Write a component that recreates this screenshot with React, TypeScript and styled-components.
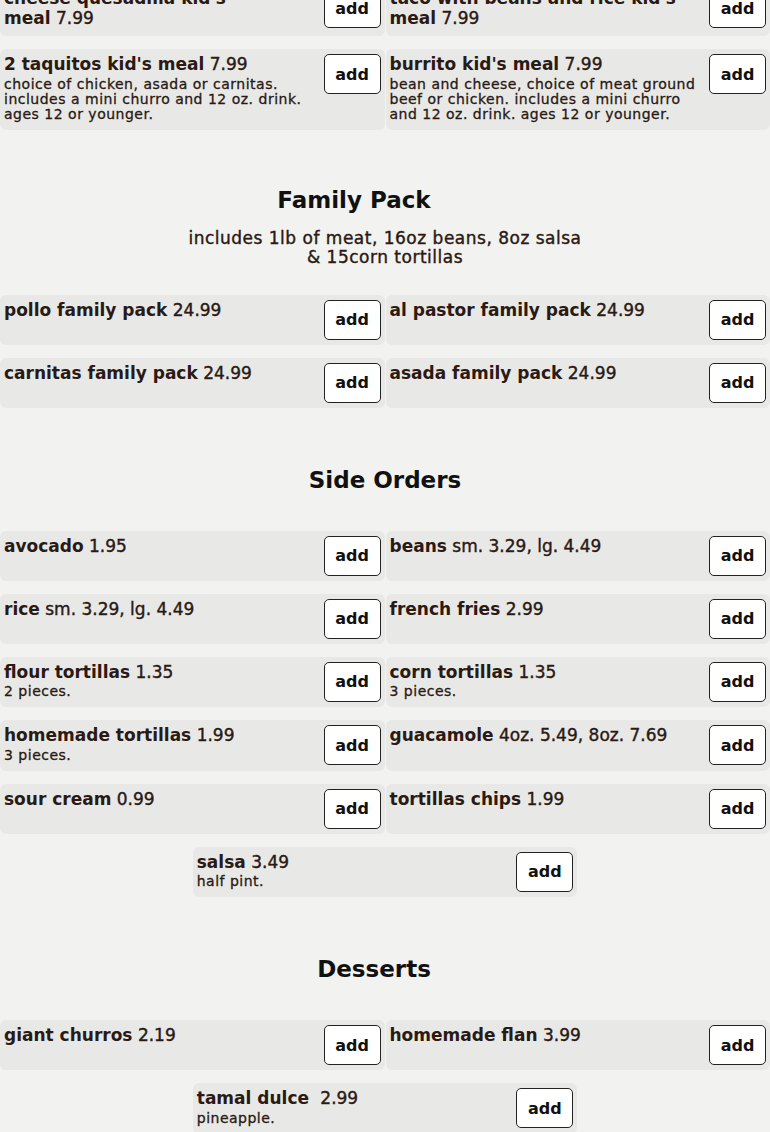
import styled, { createGlobalStyle } from 'styled-components';

type Item = {
	name: string;
	price: string;
	desc?: string;
};

type Section = {
	title?: string;
	subtitle?: string[];
	shift?: number;
	items: Item[];
};

const sections: Section[] = [
	{
		items: [
			{ name: "cheese quesadilla kid's\nmeal", price: '7.99' },
			{ name: "taco with beans and rice kid's meal", price: '7.99' },
			{
				name: "2 taquitos kid's meal",
				price: '7.99',
				desc: 'choice of chicken, asada or carnitas. includes a mini churro and 12 oz. drink. ages 12 or younger.',
			},
			{
				name: "burrito kid's meal",
				price: '7.99',
				desc: 'bean and cheese, choice of meat ground beef or chicken. includes a mini churro and 12 oz. drink. ages 12 or younger.',
			},
		],
	},
	{
		title: 'Family Pack',
		shift: 31,
		subtitle: ['includes 1lb of meat, 16oz beans, 8oz salsa', '& 15corn tortillas'],
		items: [
			{ name: 'pollo family pack', price: '24.99' },
			{ name: 'al pastor family pack', price: '24.99' },
			{ name: 'carnitas family pack', price: '24.99' },
			{ name: 'asada family pack', price: '24.99' },
		],
	},
	{
		title: 'Side Orders',
		items: [
			{ name: 'avocado', price: '1.95' },
			{ name: 'beans', price: 'sm. 3.29, lg. 4.49' },
			{ name: 'rice', price: 'sm. 3.29, lg. 4.49' },
			{ name: 'french fries', price: '2.99' },
			{ name: 'flour tortillas', price: '1.35', desc: '2 pieces.' },
			{ name: 'corn tortillas', price: '1.35', desc: '3 pieces.' },
			{ name: 'homemade tortillas', price: '1.99', desc: '3 pieces.' },
			{ name: 'guacamole', price: '4oz. 5.49, 8oz. 7.69' },
			{ name: 'sour cream', price: '0.99' },
			{ name: 'tortillas chips', price: '1.99' },
			{ name: 'salsa', price: '3.49', desc: 'half pint.' },
		],
	},
	{
		title: 'Desserts',
		shift: 11,
		items: [
			{ name: 'giant churros', price: '2.19' },
			{ name: 'homemade flan', price: '3.99' },
			{ name: 'tamal dulce\u00a0', price: '2.99', desc: 'pineapple.' },
		],
	},
];

const MenuItem = ({ item }: { item: Item }) => {
	return (
		<Card>
			<Info>
				<Title>
					<Name>{item.name}</Name> <Price>{item.price}</Price>
				</Title>
				{item.desc && <Desc>{item.desc}</Desc>}
			</Info>
			<AddButton>add</AddButton>
		</Card>
	);
};

const App = () => {
	return (
		<>
			<GlobalStyle />
			<Page>
				{sections.map((section, i) => (
					<MenuSection key={i} $first={i === 0} $tight={!!section.subtitle}>
						{section.title && (
							<Heading $shift={section.shift ?? 0} $tight={!!section.subtitle}>
								{section.title}
							</Heading>
						)}
						{section.subtitle && (
							<Subtitle>
								{section.subtitle.map((line) => (
									<div key={line}>{line}</div>
								))}
							</Subtitle>
						)}
						<Grid>
							{section.items.map((item) => (
								<MenuItem key={item.name} item={item} />
							))}
						</Grid>
					</MenuSection>
				))}
			</Page>
		</>
	);
};

const GlobalStyle = createGlobalStyle`
	body {
		margin: 0;
		background: #f2f3f0;
		font-family: 'DejaVu Sans', 'Noto Sans', sans-serif;
		color: #2a1914;
	}
`;

const Page = styled.div`
	margin-top: -17px;
	overflow: hidden;
`;

const MenuSection = styled.section<{ $first: boolean; $tight: boolean }>`
	padding-top: ${({ $first, $tight }) => ($first ? '0' : $tight ? '56px' : '58px')};
`;

const Heading = styled.h2<{ $shift: number; $tight: boolean }>`
	margin: 0 0 ${({ $tight }) => ($tight ? '15px' : '37px')};
	padding-right: ${({ $shift }) => $shift * 2}px;
	text-align: center;
	font-size: 23px;
	line-height: 28px;
	font-weight: 700;
	color: #111;
`;

const Subtitle = styled.div`
	margin: 0 0 28px;
	text-align: center;
	font-size: 17px;
	line-height: 19px;
	letter-spacing: 0.5px;
	-webkit-text-stroke: 0.4px currentColor;
`;

const Grid = styled.div`
	display: flex;
	flex-wrap: wrap;
	justify-content: center;
	column-gap: 1px;
	row-gap: 13px;
`;

const Card = styled.div`
	box-sizing: border-box;
	width: calc(50% - 0.5px);
	min-height: 50px;
	display: flex;
	justify-content: space-between;
	align-items: flex-start;
	padding: 5px 4px;
	border-radius: 6px;
	background: #e8e9e6;
`;

const Info = styled.div`
	padding: 1px 0 3px;
`;

const Title = styled.div`
	font-size: 17px;
	line-height: 19.5px;
	white-space: pre-line;
`;

const Name = styled.span`
	font-weight: 700;
`;

const Price = styled.span`
	font-weight: 400;
	-webkit-text-stroke: 0.4px currentColor;
`;

const Desc = styled.div`
	margin-top: 2px;
	font-size: 14px;
	line-height: 15px;
	letter-spacing: 0.5px;
	-webkit-text-stroke: 0.3px currentColor;
`;

const AddButton = styled.button`
	flex-shrink: 0;
	width: 57px;
	height: 40px;
	margin-left: 8px;
	padding: 0;
	border: 1px solid #222;
	border-radius: 5px;
	background: #fff;
	font-family: 'DejaVu Sans', sans-serif;
	font-size: 16px;
	font-weight: 700;
	color: #111;
`;

export default App;
